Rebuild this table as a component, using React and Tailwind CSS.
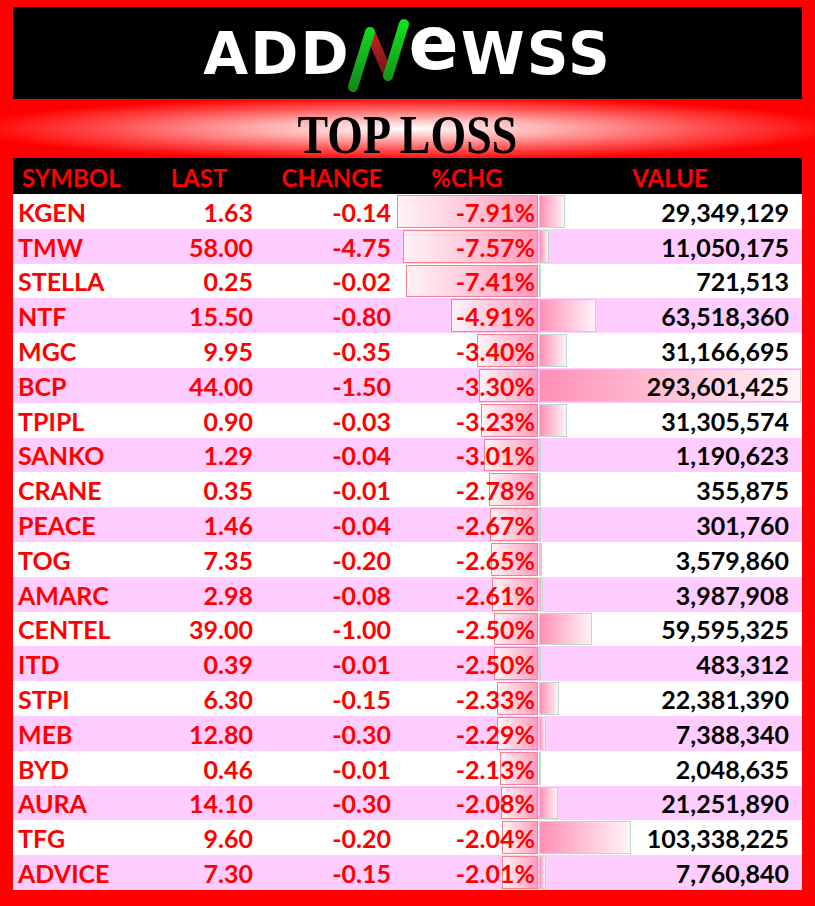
const rows = [
  ["KGEN", "1.63", "-0.14", 7.91, 29349129],
  ["TMW", "58.00", "-4.75", 7.57, 11050175],
  ["STELLA", "0.25", "-0.02", 7.41, 721513],
  ["NTF", "15.50", "-0.80", 4.91, 63518360],
  ["MGC", "9.95", "-0.35", 3.4, 31166695],
  ["BCP", "44.00", "-1.50", 3.3, 293601425],
  ["TPIPL", "0.90", "-0.03", 3.23, 31305574],
  ["SANKO", "1.29", "-0.04", 3.01, 1190623],
  ["CRANE", "0.35", "-0.01", 2.78, 355875],
  ["PEACE", "1.46", "-0.04", 2.67, 301760],
  ["TOG", "7.35", "-0.20", 2.65, 3579860],
  ["AMARC", "2.98", "-0.08", 2.61, 3987908],
  ["CENTEL", "39.00", "-1.00", 2.5, 59595325],
  ["ITD", "0.39", "-0.01", 2.5, 483312],
  ["STPI", "6.30", "-0.15", 2.33, 22381390],
  ["MEB", "12.80", "-0.30", 2.29, 7388340],
  ["BYD", "0.46", "-0.01", 2.13, 2048635],
  ["AURA", "14.10", "-0.30", 2.08, 21251890],
  ["TFG", "9.60", "-0.20", 2.04, 103338225],
  ["ADVICE", "7.30", "-0.15", 2.01, 7760840],
];

const MAX_VALUE = 293601425;

const Logo = () => (
  <div className="flex items-center justify-center text-white font-['DejaVu_Sans',sans-serif] font-bold leading-none tracking-[2px] mt-[2px]">
    <span className="text-[58px]">ADD</span>
    {/* chart mark used as the N */}
    <svg width="64" height="76" viewBox="0 0 64 76" className="-ml-[5px] -mr-[1px] mt-[4px]">
      <defs>
        <linearGradient id="g1" x1="0" y1="70" x2="0" y2="4" gradientUnits="userSpaceOnUse">
          <stop offset="0" stopColor="#138a1c" />
          <stop offset="1" stopColor="#16e01e" />
        </linearGradient>
        <linearGradient id="r1" x1="24" y1="14" x2="42" y2="56" gradientUnits="userSpaceOnUse">
          <stop offset="0" stopColor="#d0202a" />
          <stop offset="1" stopColor="#6e1414" />
        </linearGradient>
      </defs>
      <line x1="24" y1="14" x2="42" y2="56" stroke="url(#r1)" strokeWidth="10" strokeLinecap="round" />
      <line x1="7" y1="69" x2="24" y2="14" stroke="url(#g1)" strokeWidth="10" strokeLinecap="round" />
      <line x1="42" y1="58" x2="58" y2="6" stroke="url(#g1)" strokeWidth="10" strokeLinecap="round" />
    </svg>
    <span className="text-[74px] leading-none -mt-[22px]">e</span>
    <span className="text-[58px]">WSS</span>
  </div>
);

const App = () => {
  return (
    <div className="w-[815px] h-[906px] bg-[#ff0000] pt-[7px] overflow-hidden">
      <div className="mx-[13px] h-[92px] bg-black flex items-center justify-center">
        <Logo />
      </div>

      <div className="h-[59px] pt-[9px] flex justify-center bg-[radial-gradient(ellipse_at_center,#ffffff_0%,#ffb3b3_24%,#ff4d4d_52%,#ff0000_76%)]">
        <div className="text-[54px] leading-none font-bold text-black font-['Liberation_Serif',serif] scale-x-[0.85]">
          TOP LOSS
        </div>
      </div>

      <div className="mx-[13px] font-['Lato',sans-serif] font-bold text-[25px] leading-none">
        {/* header */}
        <div className="grid grid-cols-[127px_118px_138px_142px_264px] h-[36px] bg-black text-[#ff0000] pt-[4px] text-[24px]">
          <div className="flex items-center pl-[9px]">SYMBOL</div>
          <div className="flex items-center justify-center">LAST</div>
          <div className="flex items-center justify-center pl-[10px]">CHANGE</div>
          <div className="flex items-center justify-center">%CHG</div>
          <div className="flex items-center justify-center">VALUE</div>
        </div>

        {rows.map(([sym, last, chg, pct, val], i) => (
          <div
            key={sym}
            className={`grid grid-cols-[127px_118px_138px_142px_264px] h-[34.8px] ${
              i % 2 === 0 ? "bg-white" : "bg-[#ffccff]"
            }`}
          >
            <div className="flex items-center pl-[5px] pt-[2px] text-[#ff0000]">{sym}</div>
            <div className="flex items-center justify-end pr-[5px] pt-[2px] text-[#ff0000]">{last}</div>
            <div className="flex items-center justify-end pr-[5px] pt-[2px] text-[#ff0000]">{chg}</div>
            <div className="relative flex items-center justify-end pr-[3px] pt-[2px] text-[#ff0000]">
              <div
                className="absolute right-0 top-[1px] bottom-[1px] border border-[#f9808e] bg-linear-to-r from-[#fff2f7] to-[#ff9cbe]"
                style={{ width: `${pct * 17.8}px` }}
              />
              <span className="relative">-{pct.toFixed(2)}%</span>
            </div>
            <div className="relative flex items-center justify-end pr-[13px] pt-[2px] text-black">
              <div
                className="absolute left-[1px] top-[1px] bottom-[1px] border border-[#b9dcc6] bg-linear-to-r from-[#ff8fb6] to-[#fff3f7]"
                style={{ width: `${Math.max(1, (val / MAX_VALUE) * 262)}px` }}
              />
              <span className="relative">{val.toLocaleString("en-US")}</span>
            </div>
          </div>
        ))}
      </div>
    </div>
  );
};

export default App;
